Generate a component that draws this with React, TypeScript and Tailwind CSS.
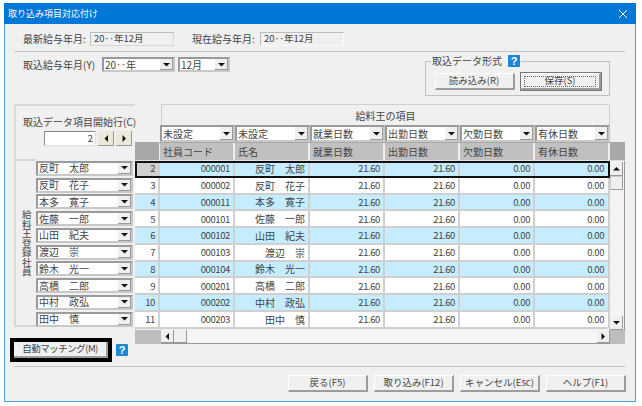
import React from "react";

const rows: [string, string, string][] = [
  ["2", "000001", "反町　太郎"],
  ["3", "000002", "反町　花子"],
  ["4", "000011", "本多　寛子"],
  ["5", "000101", "佐藤　一郎"],
  ["6", "000102", "山田　紀夫"],
  ["7", "000103", "渡辺　崇"],
  ["8", "000104", "鈴木　光一"],
  ["9", "000201", "高橋　二郎"],
  ["10", "000202", "中村　政弘"],
  ["11", "000203", "田中　慎"],
];

function Tri({ dir }: { dir: "up" | "down" | "left" | "right" }) {
  const p = {
    down: "0,1 7,1 3.5,4.5",
    up: "0,4.5 7,4.5 3.5,1",
    left: "5,0 5,7 1.5,3.5",
    right: "1.5,0 1.5,7 5,3.5",
  }[dir];
  const w = dir === "left" || dir === "right" ? 6 : 7;
  const h = dir === "left" || dir === "right" ? 7 : 5;
  return (
    <svg width={w} height={h} viewBox={`0 0 ${w} ${h}`}>
      <polygon points={p} fill="#111" />
    </svg>
  );
}

function Combo({ text, w, h = "h-[15px]" }: { text: string; w: string; h?: string }) {
  return (
    <div className={`${w} ${h} flex shrink-0 items-center justify-between bg-white border-2 border-t-[#9a9a9a] border-l-[#9a9a9a] border-r-[#c8c8c8] border-b-[#c8c8c8] pl-px overflow-hidden`}>
      <span className="whitespace-pre leading-none text-[10px]">{text}</span>
      <div className="w-[13px] h-full shrink-0 flex items-center justify-center bg-[#f0f0f0] border-r border-b border-[#999]">
        <Tri dir="down" />
      </div>
    </div>
  );
}

function Btn({ text, w, focus }: { text: string; w: string; focus?: boolean }) {
  return (
    <div className={`${w} h-[17px] flex items-center justify-center bg-[#f0f0f0] border-t border-l border-t-white border-l-white border-r-2 border-b-2 border-r-[#9c9c9c] border-b-[#9c9c9c] ${focus ? "outline outline-1 outline-[#777]" : ""}`}>
      <span className={`leading-none whitespace-nowrap ${focus ? "border border-dotted border-[#666] w-[72px] h-[11px] flex items-center justify-center" : ""}`}>{text}</span>
    </div>
  );
}

function Help() {
  return (
    <div className="w-[12px] h-[12px] bg-[#1b86d3] text-white font-bold text-[11px] leading-none flex items-center justify-center rounded-[1px] shrink-0 font-['Liberation_Sans',sans-serif]">
      ?
    </div>
  );
}

function Arrow({ dir, cls }: { dir: "up" | "down" | "left" | "right"; cls: string }) {
  return (
    <div className={`${cls} flex items-center justify-center bg-[#f0f0f0] border-r border-b border-[#999] shrink-0`}>
      <Tri dir={dir} />
    </div>
  );
}

export default function App() {
  const cell = "w-[75px] shrink-0 flex items-center justify-end pr-[3px] border-r-2 border-[#d0d0d0] tracking-[-0.4px]";
  const head = "w-[75px] shrink-0 flex items-center pl-[3px] bg-[#c0c0c0] border-r-2 border-[#eeeeee] h-full text-[10px]";
  return (
    <div className="w-[642px] h-[406px] bg-white pt-[3px] pl-[4px] overflow-hidden text-[9.5px] text-[#444] font-['Noto_Sans_CJK_JP','Noto_Sans_CJK_SC',sans-serif]">
      <div className="w-[632px] h-[399px] flex flex-col bg-[#f0f0f0] border-x border-b border-[#4da0e0]">
        <div className="h-[21px] -mx-px bg-[#0078d7] text-white flex items-center justify-between pl-[4px] pr-[8px] text-[9px] shrink-0">
          <span>取り込み項目対応付け</span>
          <svg width="10" height="10" viewBox="0 0 10 10">
            <path d="M1 1 L9 9 M9 1 L1 9" stroke="#fff" strokeWidth="1" fill="none" />
          </svg>
        </div>

        <div className="h-[28px] shrink-0 flex items-center pt-[2px] ml-[9px] mr-[10px] pl-[9px] border-b border-[#c4c4c4]">
          <span className="w-[67px] text-[10px]">最新給与年月:</span>
          <div className="w-[84px] h-[14px] border border-[#d8d8d8] border-t-[#bcbcbc] border-l-[#bcbcbc] flex items-center pl-[3px] leading-none">20‥年12月</div>
          <span className="ml-[18px] w-[68px] text-[10px]">現在給与年月:</span>
          <div className="w-[84px] h-[14px] border border-[#fafafa] border-t-[#bcbcbc] border-l-[#bcbcbc] flex items-center pl-[3px] leading-none">20‥年12月</div>
        </div>

        <div className="h-[52px] shrink-0 pl-[18px] pr-[25px] flex items-start">
          <div className="flex items-center pt-[5px]">
            <span className="w-[79px] whitespace-nowrap text-[10px]">取込給与年月(Y)</span>
            <Combo text="20‥年" w="w-[73px]" />
            <div className="w-[3px]" />
            <Combo text="12月" w="w-[52px]" />
          </div>
          <div className="ml-auto mt-[9px] w-[185px] h-[35px] border border-[#c0c0c0] flex justify-center gap-[6px] pt-[11px] relative">
            <div className="absolute -top-[7px] left-[5px] flex items-center gap-[6px] bg-[#f0f0f0] px-[1px] leading-none">
              <span className="text-[10px]">取込データ形式</span>
              <Help />
            </div>
            <Btn text="読み込み(R)" w="w-[80px]" />
            <Btn text="保存(S)" w="w-[80px]" focus />
          </div>
        </div>

        <div className="flex shrink-0 pl-[9px]">
          <div className="w-[121px] h-[223px] flex flex-col border-t-2 border-l-2 border-[#d8d8d8] border-b-0 shrink-0">
            <div className="h-[53px] relative shrink-0 border-b-0">
              <div className="pl-[7px] pt-[7px] leading-none h-[25px] flex items-center whitespace-nowrap text-[10px]">取込データ項目開始行(C)</div>
              <div className="flex items-center ml-[28px] gap-[2px] relative">
                <div className="w-[52px] h-[15px] bg-white border border-t-[#8a8a8a] border-l-[#8a8a8a] border-[#ddd] flex items-center justify-end pr-[2px] leading-none">2</div>
                <Arrow dir="left" cls="w-[16px] h-[15px] !bg-[#ece9d8]" />
                <Arrow dir="right" cls="w-[16px] h-[15px] !bg-[#ece9d8]" />
              </div>
            </div>
            <div className="flex flex-1">
              <div className="w-[20px] shrink-0 border-t-2 border-b-2 border-[#d8d8d8] h-[168px] flex items-center justify-center">
                <span className="[writing-mode:vertical-rl] leading-none">給料王登録社員</span>
              </div>
              <div className="flex flex-col pt-[1px]">
                {rows.map((r) => (
                  <div key={r[0]} className="h-[16.75px] shrink-0 flex items-center">
                    <Combo text={r[2]} w="w-[97px]" />
                  </div>
                ))}
              </div>
            </div>
          </div>

          <div className="w-[490px] flex flex-col shrink-0">
            <div className="h-[38px] flex flex-col shrink-0">
              <div className="h-[21px] ml-[26px] w-[449px] border-t border-x border-[#d0d0d0] flex items-center justify-center text-[10px]">給料王の項目</div>
              <div className="h-[17px] ml-[25px] flex gap-0">
                {["未設定", "未設定", "就業日数", "出勤日数", "欠勤日数", "有休日数"].map((t, i) => (
                  <Combo key={i} text={t} w="w-[75px]" h="h-[17px]" />
                ))}
              </div>
            </div>
            <div className="h-[202px] bg-[#a8a8a8] flex flex-col pt-[1px]">
              <div className="h-[18px] flex shrink-0 border-b border-[#e0e0e0]">
                <div className="w-[25px] shrink-0 bg-[#a8a8a8] border-r border-[#eee]" />
                {["社員コード", "氏名", "就業日数", "出勤日数", "欠勤日数", "有休日数"].map((t) => (
                  <div key={t} className={head}>{t}</div>
                ))}
              </div>
              <div className="flex h-[169px] shrink-0">
                <div className="w-[475px] shrink-0 flex flex-col relative overflow-hidden bg-[#f0f0f0]">
                  {rows.map((r, i) => (
                    <div key={r[0]} className={`h-[16.75px] shrink-0 flex border-b-2 border-[#cfcfcf] ${i % 2 === 0 ? "bg-[#c5ecff]" : "bg-white"} ${i === 0 ? "outline-2 -outline-offset-2 outline-[#111] relative" : ""}`}>
                      <div className={`w-[25px] shrink-0 flex items-center justify-end pr-[3px] border-r-2 border-[#d0d0d0] tracking-[-0.4px] ${i === 0 ? "bg-[#d0d0d0]" : ""}`}>{r[0]}</div>
                      <div className={cell}>{r[1]}</div>
                      <div className={`${cell} text-[10px] tracking-normal`}>{r[2]}</div>
                      <div className={cell}>21.60</div>
                      <div className={cell}>21.60</div>
                      <div className={cell}>0.00</div>
                      <div className={`${cell} pr-[4px]`}>0.00</div>
                    </div>
                  ))}
                </div>
                <div className="w-[15px] shrink-0 flex flex-col items-start bg-[#f4f4f4] border-r border-[#999]">
                  <Arrow dir="up" cls="w-[13px] h-[14px] mt-[1px]" />
                  <div className="w-[13px] h-[14px] bg-[#f0f0f0] border border-[#ccc] border-r-[#999] border-b-[#999]" />
                  <div className="flex-1" />
                  <Arrow dir="down" cls="w-[13px] h-[14px]" />
                </div>
              </div>
              <div className="h-[14px] flex shrink-0">
                <div className="w-[26px] bg-[#bdbdbd] shrink-0" />
                <div className="w-[449px] shrink-0 bg-[#f6f6f6] flex justify-between border-b border-[#999]">
                  <div className="flex">
                    <Arrow dir="left" cls="w-[13px] h-full" />
                    <div className="w-[13px] h-full bg-[#f0f0f0] border-r border-b border-[#999]" />
                  </div>
                  <Arrow dir="right" cls="w-[13px] h-full" />
                </div>
                <div className="flex-1 bg-[#bdbdbd]" />
              </div>
            </div>
          </div>
        </div>

        <div className="h-[24px] relative shrink-0 flex items-center pl-[5px] -mt-[6px] gap-[4px]">
          <div className="w-[102px] h-[24px] border-[4px] border-black bg-[#f0f0f0] flex items-center justify-center shrink-0">
            <div className="w-full h-full flex items-center justify-center border-r-2 border-b-2 border-[#9c9c9c] leading-none text-[9.5px] tracking-[-0.5px]">自動マッチング(M)</div>
          </div>
          <Help />
        </div>

        <div className="ml-[9px] mr-[10px] border-b border-[#c4c4c4] mt-[4px] shrink-0" />
        <div className="flex justify-end gap-[6px] pr-[9px] pt-[8px] shrink-0">
          <Btn text="戻る(F5)" w="w-[80px]" />
          <Btn text="取り込み(F12)" w="w-[80px]" />
          <Btn text="キャンセル(Esc)" w="w-[80px]" />
          <Btn text="ヘルプ(F1)" w="w-[80px]" />
        </div>
      </div>
    </div>
  );
}
